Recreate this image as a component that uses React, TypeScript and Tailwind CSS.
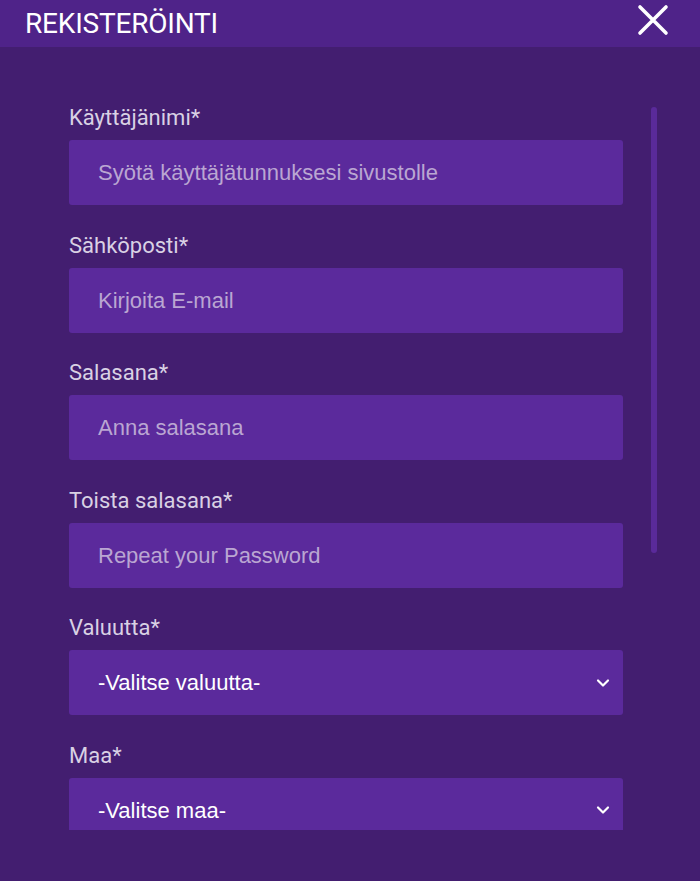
import { ChevronDown } from "lucide-react";

type Field = {
  label: string;
  text: string;
  select?: boolean;
};

const fields: Field[] = [
  { label: "Käyttäjänimi*", text: "Syötä käyttäjätunnuksesi sivustolle" },
  { label: "Sähköposti*", text: "Kirjoita E-mail" },
  { label: "Salasana*", text: "Anna salasana" },
  { label: "Toista salasana*", text: "Repeat your Password" },
  { label: "Valuutta*", text: "-Valitse valuutta-", select: true },
  { label: "Maa*", text: "-Valitse maa-", select: true },
];

export default function App() {
  return (
    <div className="w-[700px] h-[881px] bg-[#431e70] font-['Roboto',sans-serif] overflow-hidden">
      <div className="h-[47px] bg-[#4f2389] flex items-center justify-between pl-[25px] pr-[31px]">
        <span className="text-white text-[28px] leading-none tracking-[-0.2px]">REKISTERÖINTI</span>
        <svg width="32" height="32" viewBox="0 0 32 32" className="-mt-[8px]">
          <path d="M3 3 L29 29 M29 3 L3 29" stroke="white" strokeWidth="3.6" strokeLinecap="round" fill="none" />
        </svg>
      </div>

      <div className="flex pt-[53px]">
        <div className="ml-[69px] w-[554px] h-[730px] overflow-hidden pt-[6px] flex flex-col gap-[28.5px]">
          {fields.map((f) => (
            <div key={f.label} className="flex flex-col shrink-0">
              <label className="h-[24px] leading-[24px] mb-[10px] text-[22px] text-[#d9d1e4]">{f.label}</label>
              <div className="h-[65px] bg-[#5b2a9c] rounded-[3px] flex items-center justify-between pl-[29px] pr-[10px] shrink-0 font-['Liberation_Sans',Arial,sans-serif]">
                <span className={f.select ? "text-[22px] text-white" : "text-[22px] text-[#baa6d2]"}>{f.text}</span>
                {f.select && <ChevronDown className="w-[20px] h-[20px] text-white" strokeWidth={2.6} />}
              </div>
            </div>
          ))}
        </div>
        <div className="ml-[28px] w-[6px] pt-[7px]">
          <div className="h-[446px] w-[6px] rounded-full bg-[#5a2a9a]" />
        </div>
      </div>
    </div>
  );
}
